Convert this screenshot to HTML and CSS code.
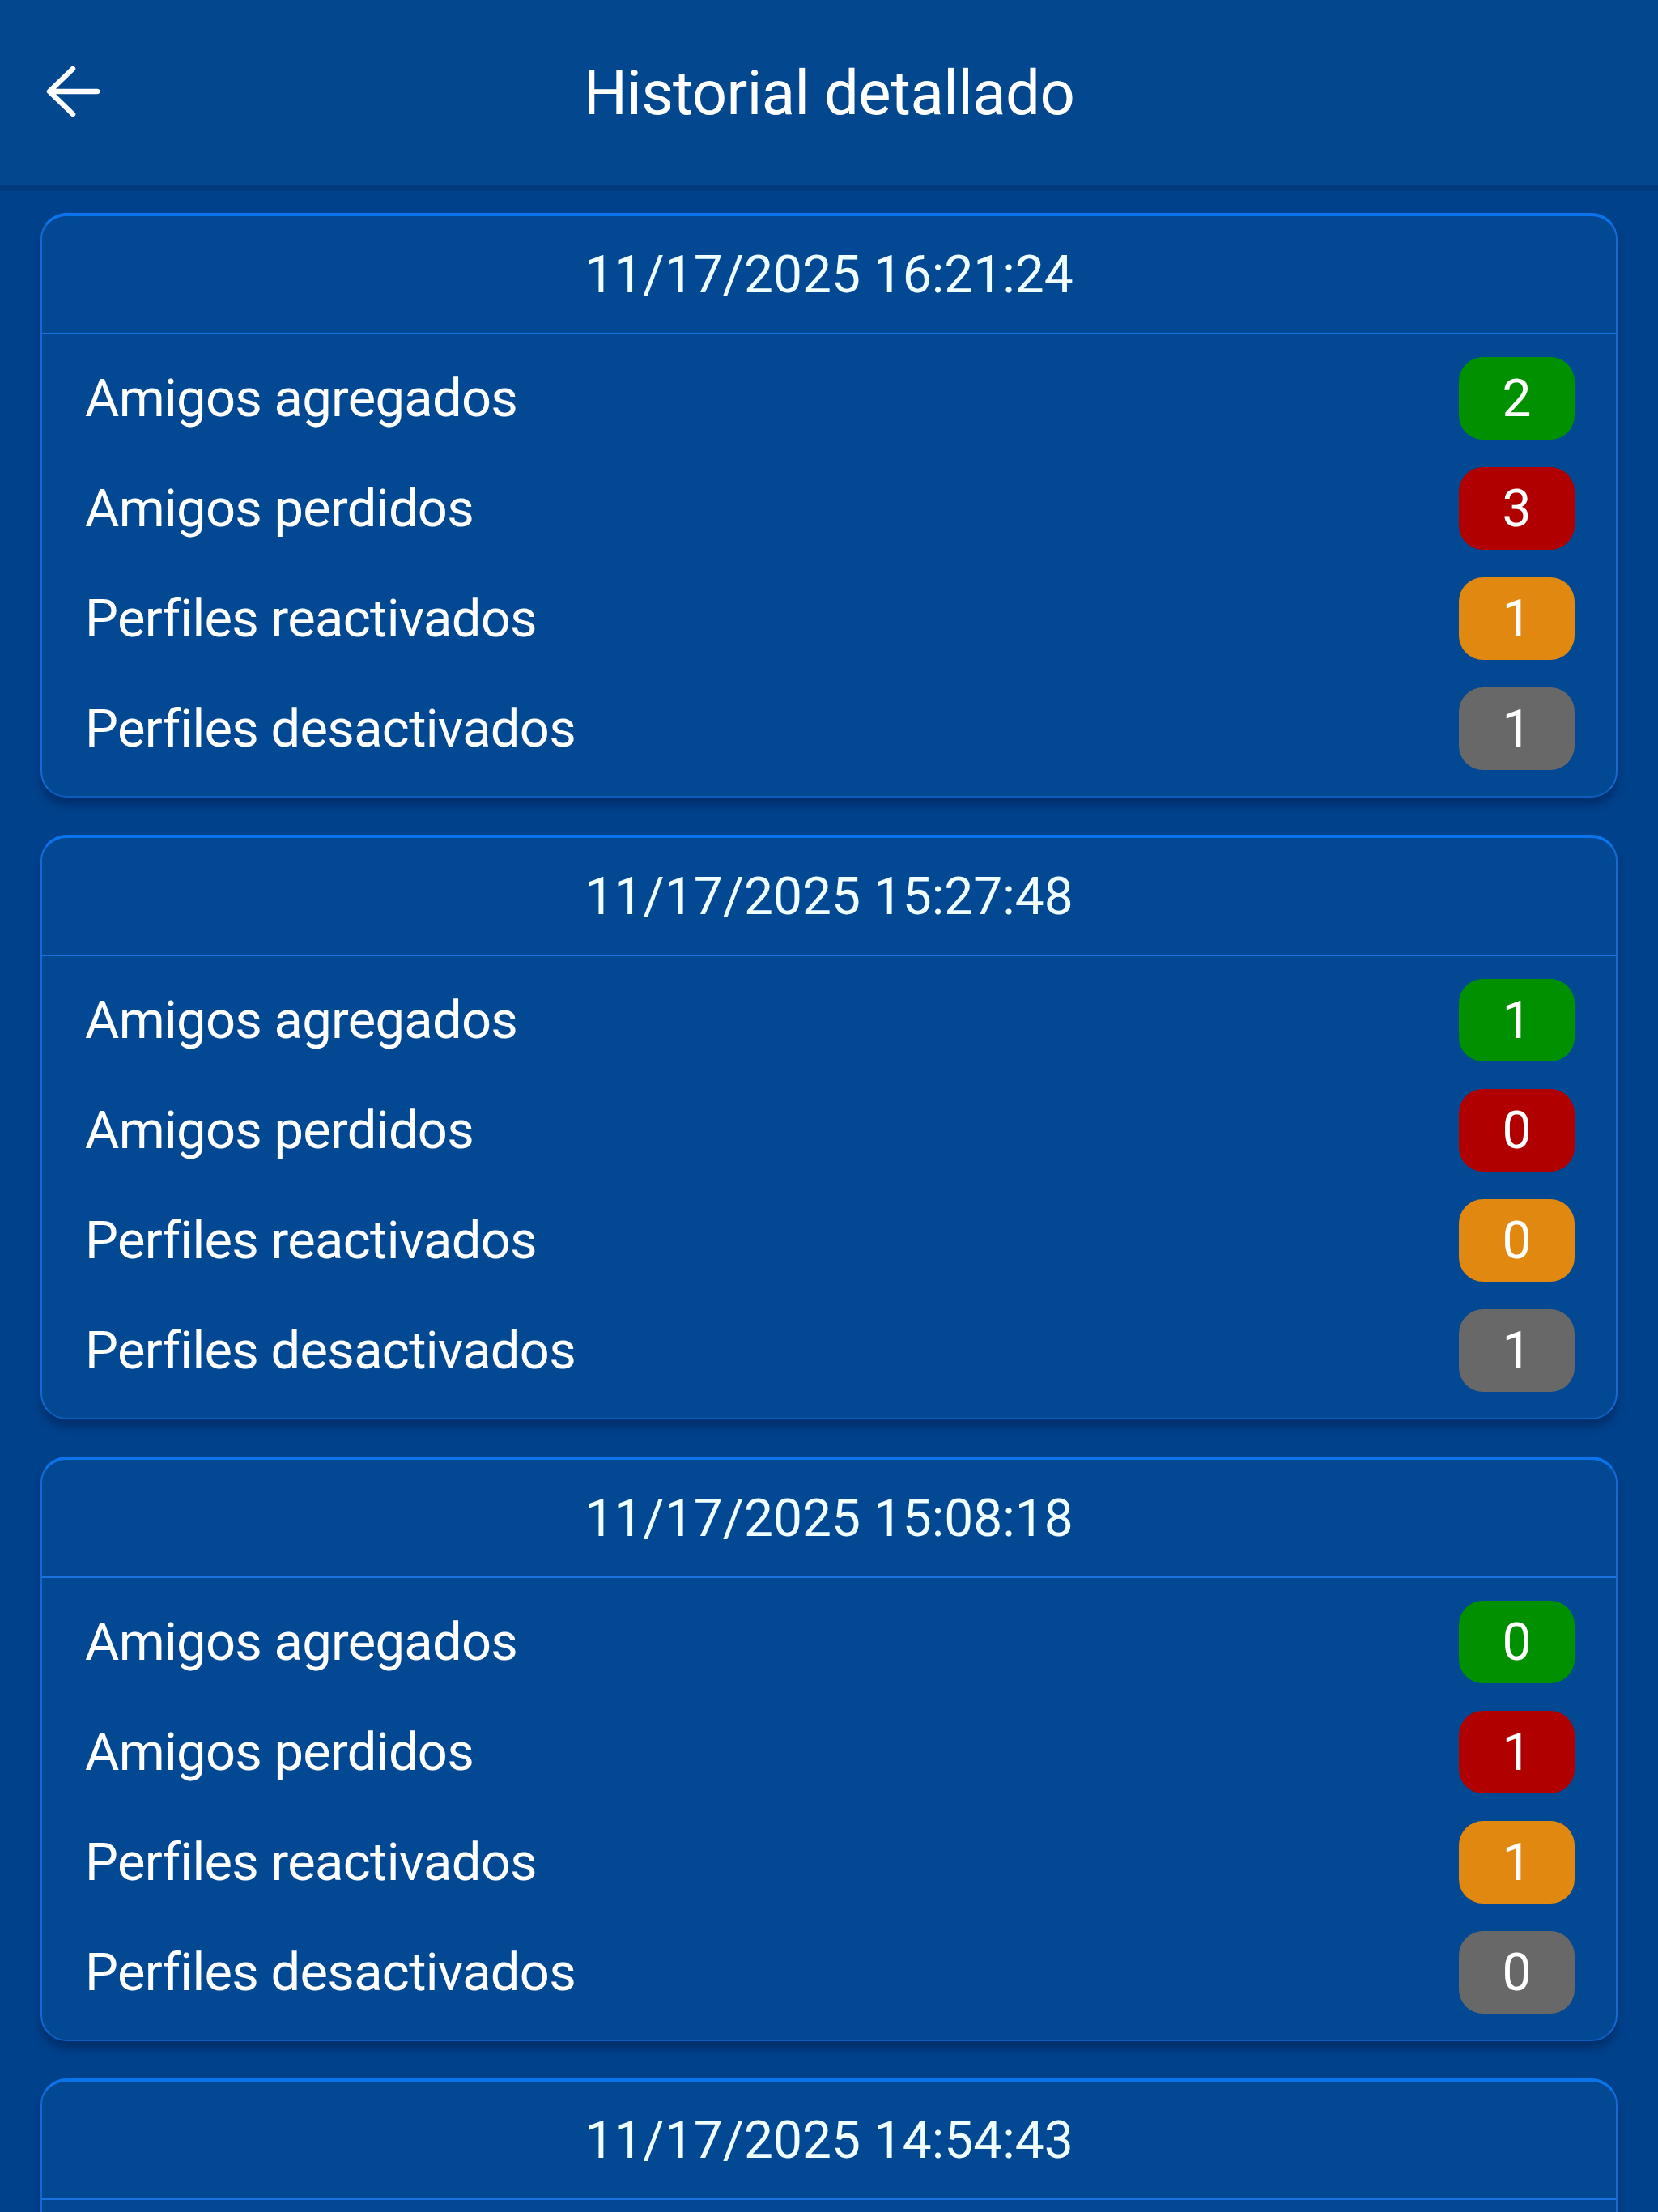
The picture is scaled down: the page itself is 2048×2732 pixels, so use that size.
FILE: index.html
```html
<!DOCTYPE html>
<html lang="es">
<head>
<meta charset="utf-8">
<title>Historial detallado</title>
<link rel="stylesheet" href="styles.css">
</head>
<body>
<header class="topbar">
  <button class="back" aria-label="Volver">
    <svg viewBox="0 0 70 66" width="70" height="66"><path d="M64 33H6M34 5L5 33L34 61" fill="none" stroke="#fff" stroke-width="6.5" stroke-linecap="round" stroke-linejoin="round"/></svg>
  </button>
  <h1 class="title">Historial detallado</h1>
</header>
<main class="list">
  <section class="card">
    <div class="card-head">11/17/2025 16:21:24</div>
    <div class="card-body">
      <div class="row"><span class="label">Amigos agregados</span><span class="badge green">2</span></div>
      <div class="row"><span class="label">Amigos perdidos</span><span class="badge red">3</span></div>
      <div class="row"><span class="label">Perfiles reactivados</span><span class="badge orange">1</span></div>
      <div class="row"><span class="label">Perfiles desactivados</span><span class="badge gray">1</span></div>
    </div>
  </section>
  <section class="card">
    <div class="card-head">11/17/2025 15:27:48</div>
    <div class="card-body">
      <div class="row"><span class="label">Amigos agregados</span><span class="badge green">1</span></div>
      <div class="row"><span class="label">Amigos perdidos</span><span class="badge red">0</span></div>
      <div class="row"><span class="label">Perfiles reactivados</span><span class="badge orange">0</span></div>
      <div class="row"><span class="label">Perfiles desactivados</span><span class="badge gray">1</span></div>
    </div>
  </section>
  <section class="card">
    <div class="card-head">11/17/2025 15:08:18</div>
    <div class="card-body">
      <div class="row"><span class="label">Amigos agregados</span><span class="badge green">0</span></div>
      <div class="row"><span class="label">Amigos perdidos</span><span class="badge red">1</span></div>
      <div class="row"><span class="label">Perfiles reactivados</span><span class="badge orange">1</span></div>
      <div class="row"><span class="label">Perfiles desactivados</span><span class="badge gray">0</span></div>
    </div>
  </section>
  <section class="card">
    <div class="card-head">11/17/2025 14:54:43</div>
    <div class="card-body card-body-empty"></div>
  </section>
</main>
</body>
</html>
```
FILE: styles.css
```css
html, body {
  margin: 0;
  padding: 0;
}
body {
  background: #00418b;
  font-family: Roboto, "Liberation Sans", sans-serif;
  color: #fff;
  height: 2732px;
  overflow: hidden;
}
.topbar {
  position: relative;
  z-index: 2;
  height: 228px;
  background: #03478f;
  box-shadow: 0 8px 0 #023a7c;
  display: flex;
  align-items: center;
  justify-content: center;
}
.back {
  position: absolute;
  left: 56px;
  top: 80px;
  width: 70px;
  height: 66px;
  padding: 0;
  border: 0;
  background: none;
  display: flex;
}
.title {
  margin: 0;
  font-size: 76px;
  font-weight: 400;
  letter-spacing: -0.5px;
  line-height: 1;
  padding-top: 2px;
}
.list {
  padding: 35px 50px 0 50px;
  display: flex;
  flex-direction: column;
  gap: 46px;
}
.card {
  background: #034893;
  border: 2px solid #1569d3;
  border-top: 4px solid #0b74ec;
  border-bottom-color: #0d5cbd;
  border-radius: 32px;
  box-shadow: 0 10px 8px rgba(0, 20, 60, 0.35);
}
.card-head {
  height: 144px;
  display: flex;
  align-items: center;
  justify-content: center;
  font-size: 64px;
  color: #f0ffff;
  border-bottom: 2px solid #1a72de;
}
.card-body {
  padding: 11px 51px 15px 53px;
}
.card-body-empty {
  height: 400px;
}
.row {
  height: 136px;
  display: flex;
  align-items: center;
  justify-content: space-between;
}
.label {
  font-size: 65px;
  letter-spacing: -0.7px;
}
.badge {
  width: 143px;
  height: 102px;
  border-radius: 30px;
  display: flex;
  align-items: center;
  justify-content: center;
  font-size: 64px;
  color: #fff;
}
.green { background: #009000; }
.red { background: #b00000; }
.orange { background: #e0880f; }
.gray { background: #686868; }
```
